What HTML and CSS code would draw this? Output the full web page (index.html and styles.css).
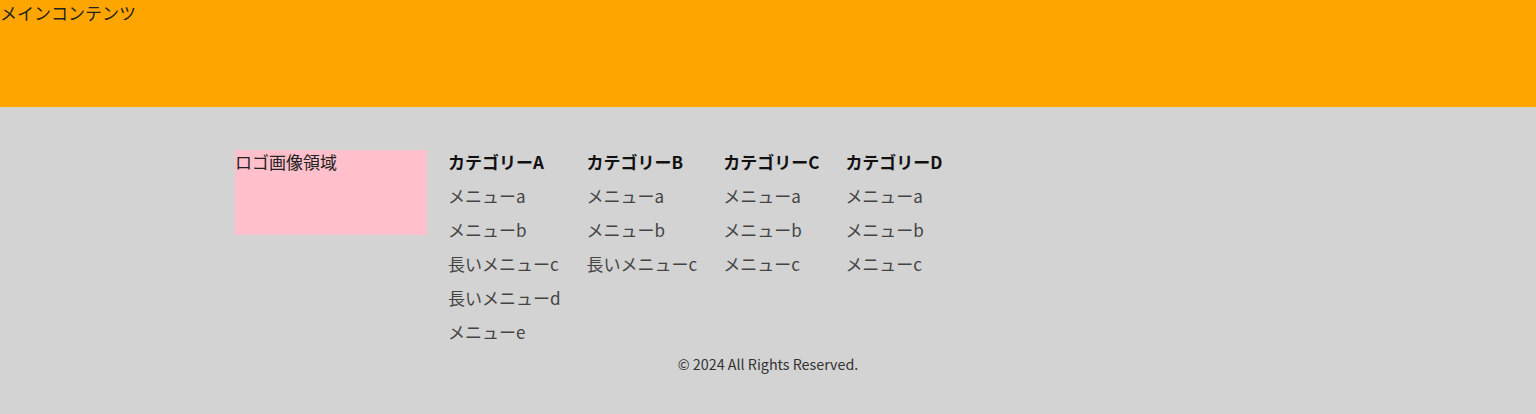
FILE: index.html
```html
<!DOCTYPE html>
<html lang="ja">
<head>
<meta charset="utf-8">
<title>Footer</title>
<link rel="stylesheet" href="styles.css">
</head>
<body>
<main class="main">メインコンテンツ</main>
<footer class="footer">
  <div class="footer-inner">
    <div class="logo">ロゴ画像領域</div>
    <nav class="nav">
      <ul class="col">
        <li class="col-title">カテゴリーA</li>
        <li>メニューa</li>
        <li>メニューb</li>
        <li>長いメニューc</li>
        <li>長いメニューd</li>
        <li>メニューe</li>
      </ul>
      <ul class="col">
        <li class="col-title">カテゴリーB</li>
        <li>メニューa</li>
        <li>メニューb</li>
        <li>長いメニューc</li>
      </ul>
      <ul class="col">
        <li class="col-title">カテゴリーC</li>
        <li>メニューa</li>
        <li>メニューb</li>
        <li>メニューc</li>
      </ul>
      <ul class="col">
        <li class="col-title">カテゴリーD</li>
        <li>メニューa</li>
        <li>メニューb</li>
        <li>メニューc</li>
      </ul>
    </nav>
  </div>
  <p class="copy">© 2024 All Rights Reserved.</p>
</footer>
</body>
</html>
```
FILE: styles.css
```css
* { box-sizing: border-box; }
html, body { margin: 0; padding: 0; }
body {
  font-family: "Noto Sans CJK JP", "Noto Sans", sans-serif;
  font-size: 17px;
  color: #222;
  background: #d3d3d3;
}
.main {
  display: block;
  height: 107px;
  background: #ffa500;
  color: #222;
}
.footer {
  background: #d3d3d3;
  padding: 38px 0 40px;
}
.footer-inner {
  width: 1066px;
  margin: 0 auto;
  display: flex;
  align-items: flex-start;
  gap: 21px;
}
.logo {
  width: 192px;
  height: 85px;
  margin-top: 5px;
  background: #ffc0cb;
  color: #222;
  line-height: 24px;
}
.nav {
  display: flex;
  gap: 26px;
}
.col {
  list-style: none;
  margin: 0;
  padding: 0;
}
.col li {
  line-height: 34px;
  color: #444;
  white-space: nowrap;
}
.col .col-title {
  font-weight: bold;
  color: #111;
}
.copy {
  margin: 4px 0 0;
  text-align: center;
  font-size: 14.3px;
  color: #333;
  line-height: 22px;
}
```
